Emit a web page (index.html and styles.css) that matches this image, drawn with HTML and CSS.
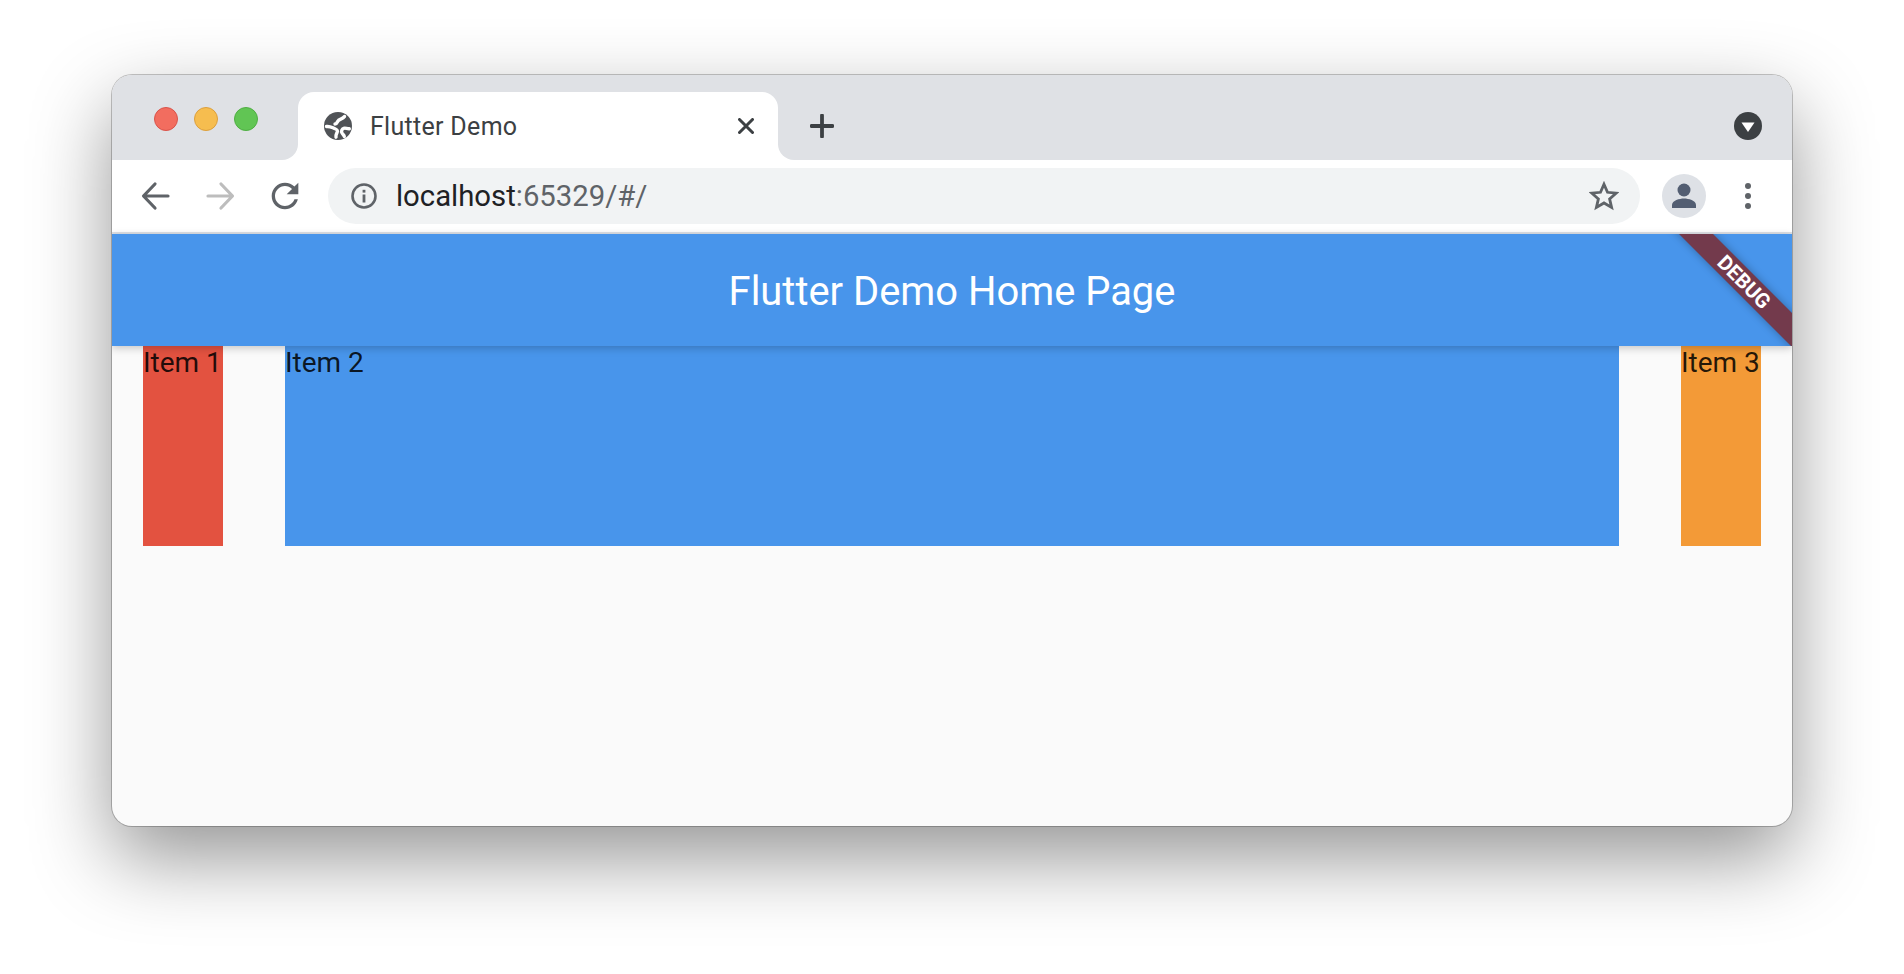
FILE: index.html
```html
<!DOCTYPE html>
<html lang="en">
<head>
<meta charset="utf-8">
<title>Flutter Demo</title>
<link rel="stylesheet" href="styles.css">
</head>
<body>
<div class="window">
  <div class="strip">
    <div class="seg seg-left">
      <span class="light red"></span><span class="light yellow"></span><span class="light green"></span>
    </div>
    <div class="tab">
      <svg class="globe" viewBox="0 0 28 28"><circle cx="14" cy="14" r="14" fill="#505357"/><g fill="none" stroke="#fff" stroke-width="3.400" stroke-linecap="round" stroke-linejoin="round"><path d="M20.500 4.500C18.500 7.500 15 6.800 13.800 9.200S12.500 12 11 12"/><path d="M2.500 14.500C6 14 8 15.500 10.500 16.500S14 18 13.200 20.200 11.500 23 12 25.200"/><path d="M25.300 16.800C23 17 21.500 15.700 19.800 16.300S16.800 19 18 21 20 23 20.300 24.500"/></g></svg>
      <span class="tab-title">Flutter Demo</span>
      <svg class="close" viewBox="0 0 16 16"><path d="M1.500 1.500l13 13M14.500 1.500l-13 13" stroke="#3c4043" stroke-width="3" stroke-linecap="round" fill="none"/></svg>
    </div>
    <div class="seg seg-right">
      <svg class="plus" viewBox="0 0 24 24"><path d="M12 1.500v21M1.500 12h21" stroke="#3c4043" stroke-width="3.800" stroke-linecap="round" fill="none"/></svg>
      <svg class="dropdown" viewBox="0 0 28 28"><circle cx="14" cy="14" r="14" fill="#3c4043"/><path d="M7.500 10.500h13L14 20z" fill="#fff"/></svg>
    </div>
  </div>
  <div class="toolbar">
    <svg class="nav" viewBox="0 0 40 40"><path d="M32 20H8M19 8L7.500 20 19 32" fill="none" stroke="#5f6368" stroke-width="3.200" stroke-linecap="round" stroke-linejoin="round"/></svg>
    <svg class="nav" viewBox="0 0 40 40"><path d="M8 20h24M21 8l11.500 12L21 32" fill="none" stroke="#bdbdbd" stroke-width="3.200" stroke-linecap="round" stroke-linejoin="round"/></svg>
    <svg class="nav reload" viewBox="0 0 24 24"><path fill="#5f6368" d="M17.650 6.350C16.200 4.900 14.210 4 12 4c-4.420 0-7.990 3.580-7.990 8s3.570 8 7.990 8c3.730 0 6.840-2.550 7.730-6h-2.080c-.82 2.330-3.040 4-5.650 4-3.310 0-6-2.690-6-6s2.690-6 6-6c1.660 0 3.140.69 4.220 1.780L13 11h7V4l-2.350 2.350z"/></svg>
    <div class="address">
      <svg class="info" viewBox="0 0 26 26"><circle cx="13" cy="13" r="11.500" fill="none" stroke="#5f6368" stroke-width="2.600"/><rect x="11.600" y="11.500" width="2.800" height="8" fill="#5f6368"/><rect x="11.600" y="6.800" width="2.800" height="2.800" fill="#5f6368"/></svg>
      <span class="url"><span class="host">localhost</span>:65329/#/</span>
      <svg class="star" viewBox="0 0 30 30"><path d="M15 3.200l3.500 8.100 8.800.8-6.700 5.800 2 8.600L15 22l-7.600 4.500 2-8.600-6.700-5.800 8.800-.8z" fill="none" stroke="#5f6368" stroke-width="2.800" stroke-linejoin="miter"/></svg>
    </div>
    <div class="avatar">
      <svg viewBox="0 0 44 44"><circle cx="22" cy="16" r="6.500" fill="#535e72"/><path d="M10 34v-3c0-4.500 7.500-6.500 12-6.500s12 2 12 6.500v3z" fill="#535e72"/></svg>
    </div>
    <div class="dots"><span></span><span></span><span></span></div>
  </div>
  <div class="content">
    <header class="appbar">
      <h1>Flutter Demo Home Page</h1>
      <div class="banner-clip"><div class="banner">DEBUG</div></div>
    </header>
    <div class="row">
      <div class="item item-red">Item 1</div>
      <div class="item item-blue">Item 2</div>
      <div class="item item-orange">Item 3</div>
    </div>
  </div>
</div>
</body>
</html>
```

FILE: styles.css
```css
* { box-sizing: border-box; }
html, body { height: 100%; }
body {
  margin: 0;
  padding: 75px 112px 0;
  background: #fff;
  font-family: Roboto, sans-serif;
  overflow: hidden;
}
.window {
  width: 1680px;
  height: 751px;
  border-radius: 20px;
  overflow: hidden;
  display: flex;
  flex-direction: column;
  background: #fafafa;
  box-shadow: 0 0 0 1px rgba(0,0,0,.22), 0 32px 80px rgba(0,0,0,.42);
}
.strip {
  height: 85px;
  display: flex;
  flex: none;
  background: linear-gradient(#dfe1e5 calc(100% - 16px), #fff 0);
}
.seg { background: #dfe1e5; display: flex; align-items: center; }
.seg-left {
  width: 186px;
  padding: 32px 0 0 42px;
  gap: 16px;
  align-items: flex-start;
  border-bottom-right-radius: 16px;
}
.light { width: 24px; height: 24px; border-radius: 50%; border: 1px solid; }
.red { background: #f26d5f; border-color: #d9534a; }
.yellow { background: #f6bd4f; border-color: #dc9f3d; }
.green { background: #61c554; border-color: #4fae43; }
.tab {
  width: 480px;
  margin-top: 17px;
  background: #fff;
  border-radius: 16px 16px 0 0;
  display: flex;
  align-items: center;
  padding: 0 24px 0 26px;
}
.globe { width: 28px; height: 28px; flex: none; }
.tab-title {
  flex: 1;
  margin-left: 18px;
  font-size: 25px;
  letter-spacing: .3px;
  color: #3c4043;
}
.close { width: 16px; height: 16px; flex: none; }
.seg-right {
  flex: 1;
  padding: 17px 30px 0 32px;
  justify-content: space-between;
  border-bottom-left-radius: 16px;
}
.plus { width: 24px; height: 24px; }
.dropdown { width: 28px; height: 28px; }
.toolbar {
  height: 74px;
  flex: none;
  display: flex;
  align-items: center;
  padding: 0 24px;
  background: #fff;
  border-bottom: 2px solid #dee1e6;
}
.nav { width: 40px; height: 40px; flex: none; margin-right: 24px; }
.reload { margin: 0 23px 0 1px; }
.address {
  flex: 1;
  height: 56px;
  border-radius: 28px;
  background: #f1f3f4;
  display: flex;
  align-items: center;
  padding: 0 21px 0 23px;
}
.info { width: 26px; height: 26px; flex: none; }
.url {
  flex: 1;
  margin-left: 19px;
  font-size: 29.300px;
  color: #5f6368;
}
.host { color: #202124; }
.star { width: 30px; height: 30px; flex: none; }
.avatar {
  width: 44px;
  height: 44px;
  margin-left: 22px;
  border-radius: 50%;
  background: #dee1e6;
  flex: none;
}
.avatar svg { display: block; width: 44px; height: 44px; }
.dots {
  width: 40px;
  margin-left: 22px;
  display: flex;
  flex-direction: column;
  align-items: center;
  gap: 4px;
}
.dots span { width: 6px; height: 6px; border-radius: 50%; background: #5f6368; }
.content { flex: 1; display: flex; flex-direction: column; }
.appbar {
  height: 112px;
  flex: none;
  position: relative;
  z-index: 1;
  display: flex;
  align-items: center;
  justify-content: center;
  background: #4895eb;
  box-shadow: 0 2px 8px rgba(0,0,0,.22);
}
h1 {
  margin: 2px 0 0;
  font-size: 39.900px;
  font-weight: 400;
  color: #fff;
}
.banner-clip { position: absolute; inset: 0; overflow: hidden; }
.banner {
  position: absolute;
  top: 36px;
  right: -52px;
  width: 200px;
  height: 24px;
  transform: rotate(45deg);
  background: #733a4c;
  box-shadow: 0 0 8px rgba(0,0,0,.3);
  color: #fff;
  font-size: 20.500px;
  font-weight: 700;
  line-height: 24px;
  text-align: center;
}
.row {
  height: 200px;
  display: flex;
  gap: 62px;
  padding: 0 31px;
}
.item {
  padding-top: 1px;
  font-size: 28px;
  line-height: 32px;
  color: rgba(0,0,0,.85);
}
.item-red { width: 80px; background: #e35240; }
.item-blue { flex: 1; background: #4895eb; }
.item-orange { width: 80px; background: #f39a37; }
```
